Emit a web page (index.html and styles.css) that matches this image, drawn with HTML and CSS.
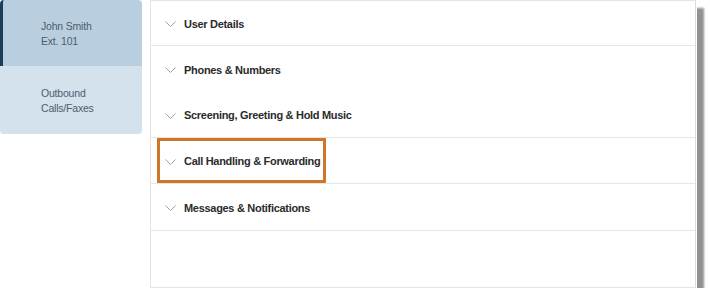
FILE: index.html
```html
<!DOCTYPE html>
<html>
<head>
<meta charset="utf-8">
<link rel="stylesheet" href="styles.css">
</head>
<body>
<div class="frame">
  <nav class="sidebar">
    <div class="nav-item active">John Smith<br>Ext. 101</div>
    <div class="nav-item">Outbound<br>Calls/Faxes</div>
  </nav>
  <main class="panel">
    <div class="row sep"><svg class="chev" viewBox="0 0 11 6"><path d="M0.5 0.5 L5.5 5.5 L10.5 0.5" /></svg><span>User Details</span></div>
    <div class="row"><svg class="chev" viewBox="0 0 11 6"><path d="M0.5 0.5 L5.5 5.5 L10.5 0.5" /></svg><span>Phones &amp; Numbers</span></div>
    <div class="row sep"><svg class="chev" viewBox="0 0 11 6"><path d="M0.5 0.5 L5.5 5.5 L10.5 0.5" /></svg><span>Screening, Greeting &amp; Hold Music</span></div>
    <div class="row sep"><svg class="chev" viewBox="0 0 11 6"><path d="M0.5 0.5 L5.5 5.5 L10.5 0.5" /></svg><span>Call Handling &amp; Forwarding</span><div class="highlight"></div></div>
    <div class="row sep"><svg class="chev" viewBox="0 0 11 6"><path d="M0.5 0.5 L5.5 5.5 L10.5 0.5" /></svg><span>Messages &amp; Notifications</span></div>
  </main>
</div>
</body>
</html>
```

FILE: styles.css
```css
html, body {
  margin: 0;
  padding: 0;
  background: #ffffff;
}

.frame {
  width: 697px;
  height: 288px;
  display: flex;
  gap: 8px;
  background: #ffffff;
  box-shadow: 7px 8px 2px #929292;
  font-family: "Liberation Sans", Arial, sans-serif;
}

.sidebar {
  width: 142px;
  flex: none;
  display: flex;
  flex-direction: column;
  align-self: flex-start;
}

.nav-item {
  height: 68px;
  box-sizing: border-box;
  padding: 19px 0 0 41px;
  font-size: 10.5px;
  letter-spacing: -0.2px;
  line-height: 15px;
  color: #4d5d6c;
  background: #d3e2ed;
}

.nav-item:last-child {
  padding-top: 20px;
  border-radius: 0 0 4px 4px;
}

.nav-item.active {
  background: #b9cfdf;
  border-left: 3px solid #1c3d58;
  padding-left: 38px;
  border-radius: 4px 4px 0 0;
  height: 66px;
}

.panel {
  width: 546px;
  flex: none;
  box-sizing: border-box;
  border: 1px solid #e4e4e4;
  border-right-color: #dcdcdc;
  display: flex;
  flex-direction: column;
}

.row {
  height: 46px;
  flex: none;
  box-sizing: border-box;
  display: flex;
  align-items: center;
  padding: 1px 0 0 14px;
  font-size: 11px;
  letter-spacing: -0.3px;
  font-weight: bold;
  color: #2b2b2b;
  position: relative;
}

.row:first-child {
  height: 45px;
}

.row.sep {
  border-bottom: 1px solid #e6e6e6;
}

.row:nth-child(5) {
  height: 47px;
}

.chev {
  width: 11px;
  height: 6px;
  margin-right: 8px;
  margin-top: 1px;
  fill: none;
  stroke: #a0a0a0;
  stroke-width: 1;
}

.highlight {
  position: absolute;
  left: 6px;
  top: 0;
  width: 169px;
  height: 45px;
  box-sizing: border-box;
  border: 3px solid #cf7629;
}
```
